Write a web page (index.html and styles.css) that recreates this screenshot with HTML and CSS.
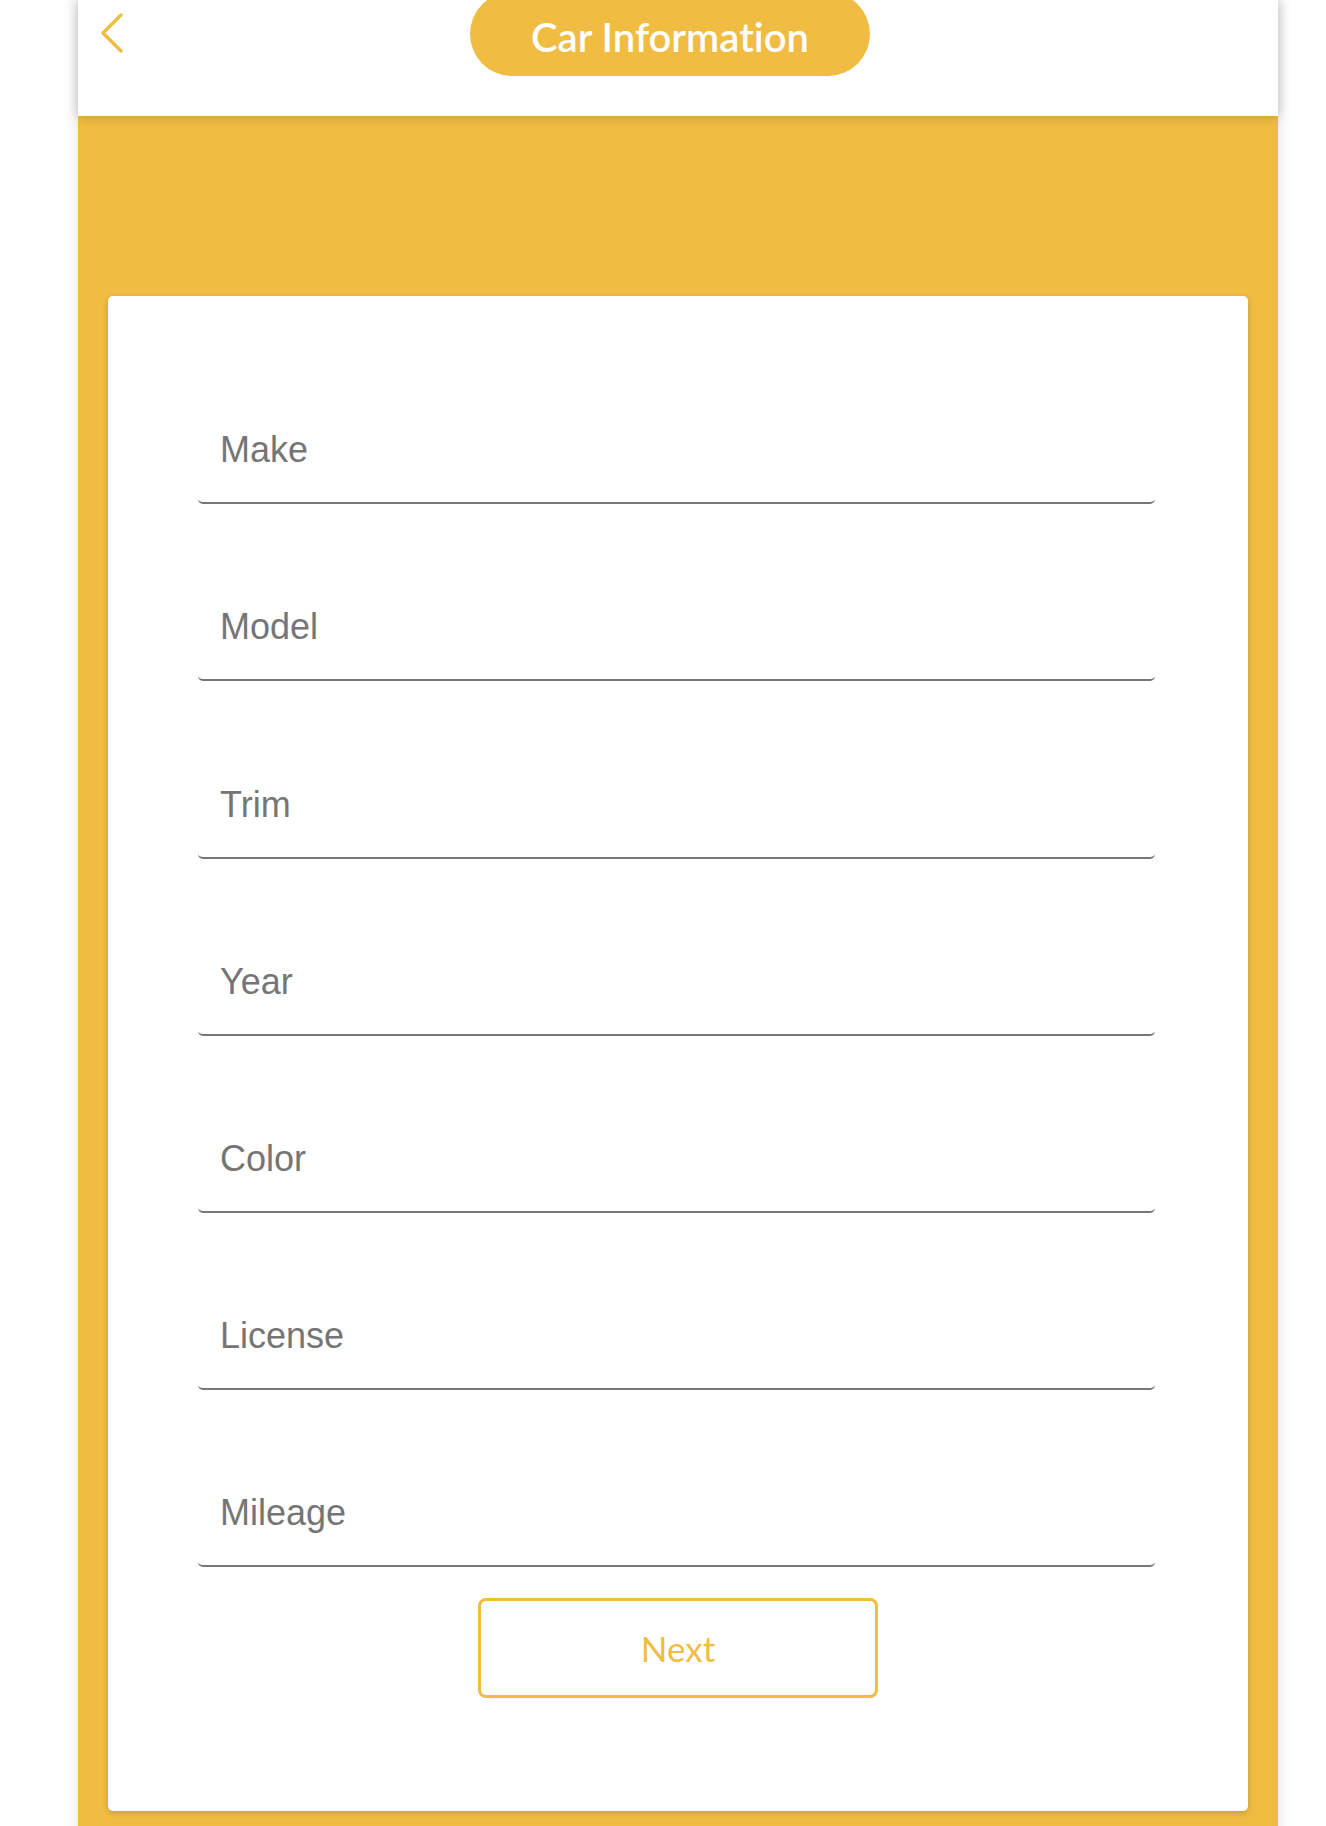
FILE: index.html
```html
<!DOCTYPE html>
<html lang="en">
<head>
<meta charset="utf-8">
<title>Car Information</title>
<link rel="stylesheet" href="styles.css">
</head>
<body>
<div class="app">
  <header class="topbar">
    <button class="back" aria-label="Back">
      <svg width="24" height="42" viewBox="0 0 24 42"><path d="M21 3 L3 21 L21 39" fill="none" stroke="#f0bc42" stroke-width="3.4" stroke-linecap="round" stroke-linejoin="round"/></svg>
    </button>
    <h1 class="title">Car Information</h1>
  </header>
  <main class="band">
    <form class="card">
      <div class="field"><input type="text" placeholder="Make"></div>
      <div class="field"><input type="text" placeholder="Model"></div>
      <div class="field"><input type="text" placeholder="Trim"></div>
      <div class="field"><input type="text" placeholder="Year"></div>
      <div class="field"><input type="text" placeholder="Color"></div>
      <div class="field"><input type="text" placeholder="License"></div>
      <div class="field"><input type="text" placeholder="Mileage"></div>
      <div class="actions"><button type="button" class="next">Next</button></div>
    </form>
  </main>
</div>
</body>
</html>
```
FILE: styles.css
```css
html, body {
  margin: 0;
  padding: 0;
  background: #ffffff;
}
body {
  font-family: "Liberation Sans", Arial, sans-serif;
  overflow: hidden;
}
.app {
  width: 1200px;
  margin-left: 78px;
  box-shadow: 0 0 14px rgba(0, 0, 0, 0.12);
}
.topbar {
  height: 116px;
  background: #ffffff;
  display: flex;
  align-items: flex-start;
  padding-left: 22px;
  position: relative;
  z-index: 1;
  box-shadow: 0 0 12px rgba(0, 0, 0, 0.22);
}
.back {
  border: 0;
  background: none;
  padding: 0;
  margin-top: 12px;
  width: 24px;
  height: 42px;
  cursor: pointer;
  display: block;
}
.back svg { display: block; }
.title {
  margin: -8px 0 0 346px;
  width: 400px;
  height: 84px;
  border-radius: 42px;
  background: #f0bc42;
  color: #ffffff;
  font-family: Lato, "Liberation Sans", sans-serif;
  font-weight: 600;
  font-size: 40px;
  line-height: 90px;
  text-align: center;
  font-variant-ligatures: none;
  font-feature-settings: "liga" 0;
}
.band {
  background: #f0bc42;
  padding: 180px 30px 60px;
}
.card {
  background: #ffffff;
  border-radius: 5px;
  box-shadow: 0 2px 6px rgba(0, 0, 0, 0.18);
  padding: 31px 0 113px;
}
.field {
  margin: 91.2px 0 0 90px;
  width: 957px;
}
.field input {
  display: block;
  width: 100%;
  box-sizing: border-box;
  border: 0;
  border-bottom: 2px solid #777777;
  border-radius: 5px;
  outline: none;
  background: transparent;
  font-family: "Liberation Sans", Arial, sans-serif;
  font-size: 36px;
  line-height: 42px;
  height: 86px;
  padding: 11px 0 31px 22px;
  color: #555555;
}
.field input::placeholder {
  color: #757575;
  opacity: 1;
}
.actions {
  display: flex;
  justify-content: center;
  margin-top: 31px;
}
.next {
  width: 400px;
  height: 100px;
  box-sizing: border-box;
  background: #ffffff;
  border: 3px solid #f0bc42;
  border-radius: 8px;
  color: #f0bc42;
  font-family: Lato, "Liberation Sans", sans-serif;
  font-size: 35px;
  font-weight: 400;
  cursor: pointer;
}
```
